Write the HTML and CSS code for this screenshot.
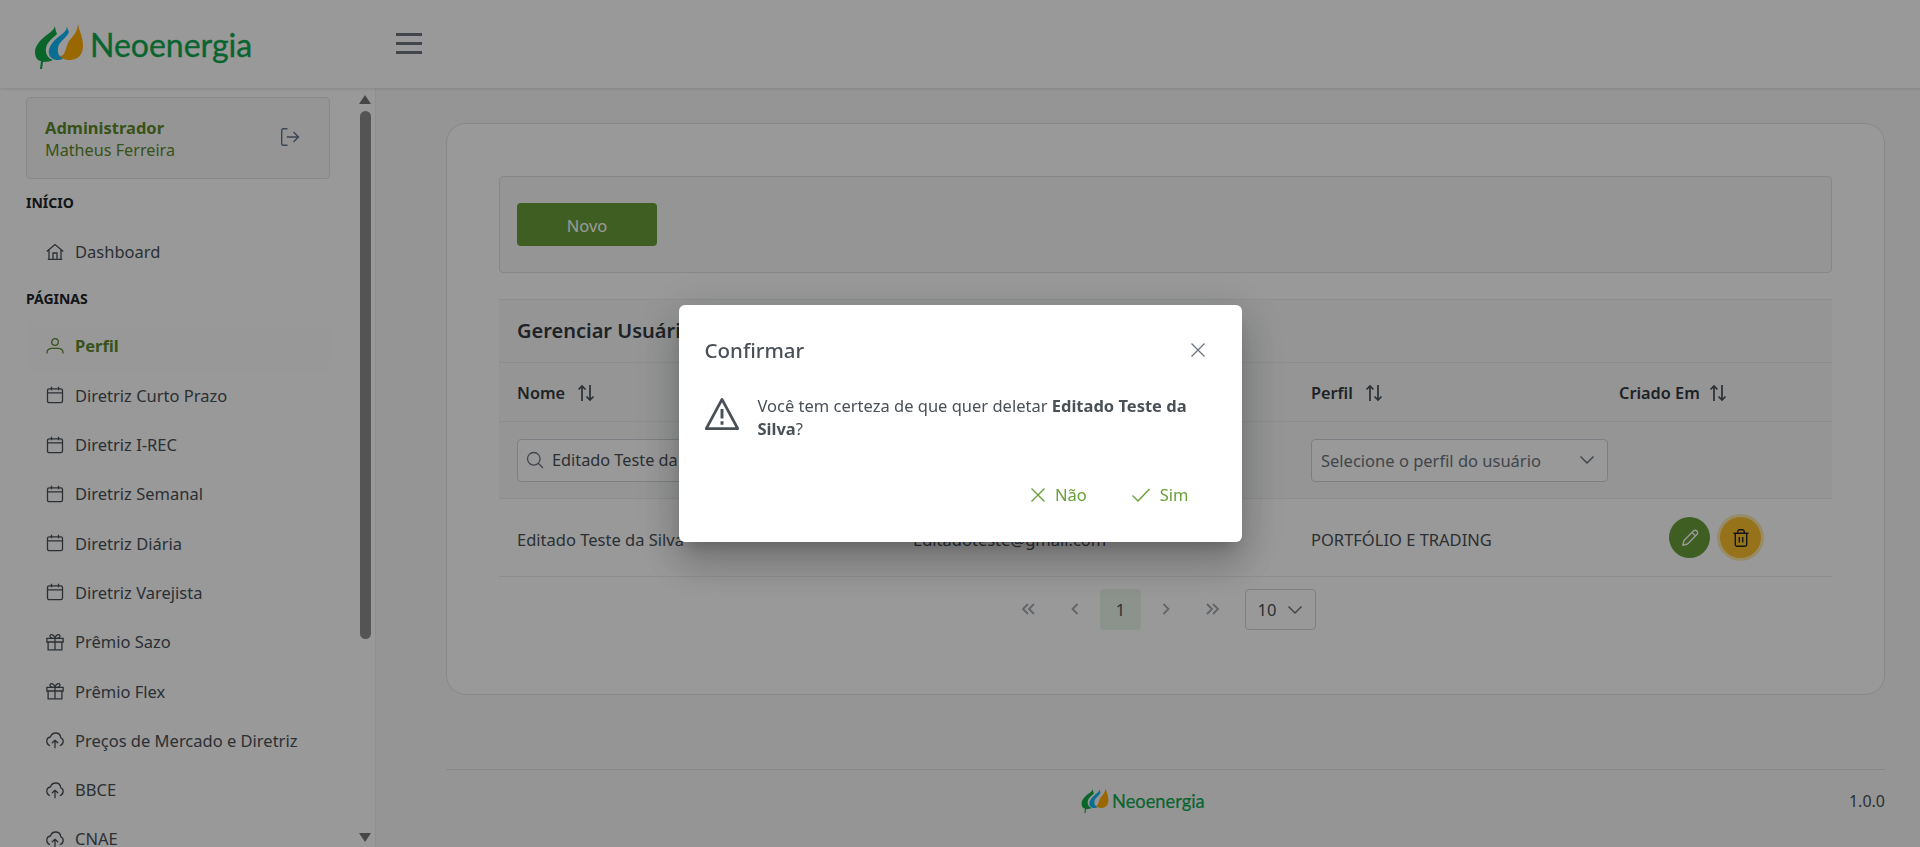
FILE: index.html
```html
<!DOCTYPE html>
<html lang="pt-BR">
<head>
<meta charset="utf-8">
<title>Neoenergia</title>
<link rel="stylesheet" href="styles.css">
</head>
<body>
<svg class="defs" width="0" height="0" aria-hidden="true">
  <symbol id="leaves" viewBox="0 0 50 47">
    <path fill="#10a845" d="M21 3C20 8 13 11 8 16C3 21 1 25 1 29C1 36 5 38 7 38L6 46L8 46L9 39C13 39 17 38 19 37C14 35 11 31 12 25C13 19 19 15 23 11C22 8 21 6 21 3Z"/>
    <path fill="#12b8f5" d="M33 3C33 8 28 11 23 15C17 20 14 26 15 31C16 35 20 37 24 37C27 37 29 36 29 35C26 34 23 31 24 25C25 18 32 16 35 9C34 7 33 5 33 3Z"/>
    <path fill="#ffae00" d="M44 1C45 8 49 13 49 23C49 32 43 37 36 37C31 37 27 35 26 33C31 33 31 27 34 20C36 15 43 12 44 1Z"/>
  </symbol>
  <symbol id="i-cal" viewBox="0 0 18 18"><path fill="none" stroke="currentColor" stroke-width="1.3" d="M3.2 2.8H14.8A1.7 1.7 0 0 1 16.5 4.5V15A1.7 1.7 0 0 1 14.8 16.700H3.200A1.700 1.700 0 0 1 1.500 15V4.500A1.700 1.700 0 0 1 3.200 2.800ZM1.500 6.800H16.500M5.500 .8V4.300M12.500 .8V4.300"/></symbol>
  <symbol id="i-gift" viewBox="0 0 18 18"><path fill="none" stroke="currentColor" stroke-width="1.3" d="M.9 5.300H17.100V9H.9ZM2.100 9V16.800H15.900V9M9 5.300V16.800M9 5.300C6 5.300 4 4.400 4 2.900C4 .8 7.800 .8 9 5.300C10.200 .8 14 .8 14 2.900C14 4.400 12 5.300 9 5.300Z"/></symbol>
  <symbol id="i-up" viewBox="0 0 18 18"><path fill="none" stroke="currentColor" stroke-width="1.3" stroke-linecap="round" stroke-linejoin="round" d="M3.500 14.500C1.800 13.700 .8 12 .8 10.200C.8 8 2.400 6.300 4.400 6C5.200 3.600 7.200 2 9.600 2C12.400 2 14.500 4.100 14.800 6.800C16.200 7.300 17.200 8.600 17.200 10.200C17.200 12.200 15.900 13.800 14.300 14.500M9 16.700V9.300M6.300 11.800L9 9.200L11.700 11.800"/></symbol>
  <symbol id="i-sort" viewBox="0 0 20 20"><path fill="none" stroke="currentColor" stroke-width="1.700" d="M6 18V3M2.500 6.500L6 3L9.500 6.500M14 2V17M10.500 13.500L14 17L17.500 13.500"/></symbol>
  <symbol id="i-chev" viewBox="0 0 16 16"><path fill="none" stroke="currentColor" stroke-width="1.500" d="M1.500 4.500L8 11L14.500 4.500"/></symbol>
</svg>

<header class="topbar">
  <div class="brand">
    <svg class="leaf-logo"><use href="#leaves"/></svg>
    <span class="brand-name">Neoenergia</span>
  </div>
  <div class="menu-btn"><span></span><span></span><span></span></div>
</header>

<div class="layout">
  <aside class="sidebar">
    <nav class="side-scroll">
      <div class="user-box">
        <div class="user-text">
          <strong>Administrador</strong>
          <span>Matheus Ferreira</span>
        </div>
        <svg class="logout" viewBox="0 0 20 20"><path fill="none" stroke="currentColor" stroke-width="1.400" d="M7.500 1.700H3.500A1.800 1.800 0 0 0 1.700 3.500V16.500A1.800 1.800 0 0 0 3.500 18.300H7.500M6.800 10H18.500M13.500 5L18.500 10L13.500 15"/></svg>
      </div>
      <div class="section first">INÍCIO</div>
      <a class="item"><svg class="ico" viewBox="0 0 18 18"><path fill="none" stroke="currentColor" stroke-width="1.300" d="M.7 8.600L9 1.500L17.300 8.600M3 6.800V16.400H15V6.800M1.800 16.400H16.200M7 16.400V10H11V16.400"/></svg>Dashboard</a>
      <div class="section">PÁGINAS</div>
      <a class="item active"><svg class="ico" viewBox="0 0 18 18"><circle cx="9" cy="5" r="3.300" fill="none" stroke="currentColor" stroke-width="1.300"/><path fill="none" stroke="currentColor" stroke-width="1.300" d="M1 16.500V15.500C1 12.800 3.500 11.300 6 11.300H12C14.500 11.300 17 12.800 17 15.500V16.500"/></svg>Perfil</a>
      <a class="item"><svg class="ico"><use href="#i-cal"/></svg>Diretriz Curto Prazo</a>
      <a class="item"><svg class="ico"><use href="#i-cal"/></svg>Diretriz I-REC</a>
      <a class="item"><svg class="ico"><use href="#i-cal"/></svg>Diretriz Semanal</a>
      <a class="item"><svg class="ico"><use href="#i-cal"/></svg>Diretriz Diária</a>
      <a class="item"><svg class="ico"><use href="#i-cal"/></svg>Diretriz Varejista</a>
      <a class="item"><svg class="ico"><use href="#i-gift"/></svg>Prêmio Sazo</a>
      <a class="item"><svg class="ico"><use href="#i-gift"/></svg>Prêmio Flex</a>
      <a class="item"><svg class="ico"><use href="#i-up"/></svg>Preços de Mercado e Diretriz</a>
      <a class="item"><svg class="ico"><use href="#i-up"/></svg>BBCE</a>
      <a class="item"><svg class="ico"><use href="#i-up"/></svg>CNAE</a>
    </nav>
    <div class="scrollbar">
      <span class="arrow-up"></span>
      <span class="thumb"></span>
      <span class="arrow-down"></span>
    </div>
  </aside>

  <main class="main">
    <section class="card">
      <div class="toolbar"><button class="btn-new">Novo</button></div>
      <div class="table-title">Gerenciar Usuários</div>
      <div class="row head">
        <div class="cell">Nome<svg class="sort"><use href="#i-sort"/></svg></div>
        <div class="cell">Email<svg class="sort"><use href="#i-sort"/></svg></div>
        <div class="cell">Perfil<svg class="sort"><use href="#i-sort"/></svg></div>
        <div class="cell">Criado Em<svg class="sort tight"><use href="#i-sort"/></svg></div>
      </div>
      <div class="row filters">
        <div class="cell">
          <div class="field search">
            <svg class="search-ico" viewBox="0 0 18 18"><circle cx="7.800" cy="7.800" r="6.300" fill="none" stroke="currentColor" stroke-width="1.300"/><path stroke="currentColor" stroke-width="1.300" d="M12.300 12.300L17 17"/></svg>
            Editado Teste da Silva
          </div>
        </div>
        <div class="cell"><div class="field email">Email</div></div>
        <div class="cell"><div class="field select">Selecione o perfil do usuário<svg class="chev"><use href="#i-chev"/></svg></div></div>
        <div class="cell"></div>
      </div>
      <div class="row data">
        <div class="cell txt">Editado Teste da Silva</div>
        <div class="cell txt">Editadoteste@gmail.com</div>
        <div class="cell txt">PORTFÓLIO E TRADING</div>
        <div class="cell actions">
          <span class="round edit"><svg viewBox="0 0 18 18"><path fill="none" stroke="currentColor" stroke-width="1.400" stroke-linejoin="round" d="M1.800 16.200L3 11.500L12.400 2.100A2 2 0 0 1 15.900 5.600L6.500 15ZM11 3.500L14.500 7"/></svg></span>
          <span class="round del"><svg viewBox="0 0 18 18"><path fill="none" stroke="currentColor" stroke-width="1.400" d="M1.500 4.300H16.500M3.300 4.300V15.500A1.700 1.700 0 0 0 5 17.200H13A1.700 1.700 0 0 0 14.700 15.500V4.300M5.800 4.300V2.500A1.700 1.700 0 0 1 7.500 .8H10.500A1.700 1.700 0 0 1 12.200 2.500V4.300M7.300 8V13.500M10.700 8V13.500"/></svg></span>
        </div>
      </div>
      <div class="pager">
        <svg class="pg" viewBox="0 0 16 16"><path d="M8 3L3 8L8 13M14 3L9 8L14 13"/></svg>
        <svg class="pg" viewBox="0 0 16 16"><path d="M10.500 3L5.500 8L10.500 13"/></svg>
        <span class="pg-current">1</span>
        <svg class="pg" viewBox="0 0 16 16"><path d="M5.500 3L10.500 8L5.500 13"/></svg>
        <svg class="pg" viewBox="0 0 16 16"><path d="M2 3L7 8L2 13M8 3L13 8L8 13"/></svg>
        <div class="field page-size">10<svg class="chev"><use href="#i-chev"/></svg></div>
      </div>
    </section>
    <footer class="footer">
      <div class="foot-brand">
        <svg class="leaf-small"><use href="#leaves"/></svg>
        <span>Neoenergia</span>
      </div>
      <span class="version">1.0.0</span>
    </footer>
  </main>
</div>

<div class="overlay">
  <div class="dialog" role="dialog">
    <div class="dlg-head">
      <span class="dlg-title">Confirmar</span>
      <svg class="dlg-close" viewBox="0 0 16 16"><path fill="none" stroke="currentColor" stroke-width="1.300" d="M1.500 1.500L14.500 14.500M14.500 1.500L1.500 14.500"/></svg>
    </div>
    <div class="dlg-body">
      <svg class="warn" viewBox="0 0 32 30"><path fill="none" stroke="currentColor" stroke-width="2.500" stroke-linejoin="round" d="M16 2L30 28H2Z"/><path stroke="currentColor" stroke-width="2.600" d="M16 10.500V19M16 21.500V24.500"/></svg>
      <p>Você tem certeza de que quer deletar <b>Editado Teste da Silva</b>?</p>
    </div>
    <div class="dlg-foot">
      <span class="dlg-btn"><svg viewBox="0 0 16 16"><path fill="none" stroke="currentColor" stroke-width="1.400" d="M1.500 1.500L14.500 14.500M14.500 1.500L1.500 14.500"/></svg>Não</span>
      <span class="dlg-btn"><svg viewBox="0 0 20 16"><path fill="none" stroke="currentColor" stroke-width="1.400" d="M1.500 8.500L7 14L18.500 2"/></svg>Sim</span>
    </div>
  </div>
</div>
</body>
</html>
```

FILE: styles.css
```css
* { box-sizing: border-box; }
html, body { margin: 0; height: 100%; }
body {
  height: 847px;
  overflow: hidden;
  background: #f8f9fa;
  color: #495057;
  font-family: "Noto Sans", "Open Sans", sans-serif;
  font-size: 16.500px;
}
.defs { position: absolute; }

/* Top bar */
.topbar {
  height: 88px;
  display: flex;
  align-items: center;
  background: #fff;
  box-shadow: 0 1px 3px rgba(0, 0, 0, .12);
  position: relative;
  z-index: 2;
}
.brand { width: 396px; padding: 4px 0 0 34px; display: flex; align-items: center; gap: 6px; }
.leaf-logo { width: 50px; height: 47px; }
.brand-name {
  font-family: Lato, sans-serif;
  font-size: 32px;
  line-height: 47px;
  color: #10a84f;
  -webkit-text-stroke: .35px #10a84f;
  margin-top: -4px;
}
.menu-btn { width: 26px; display: flex; flex-direction: column; gap: 6px; margin-top: -2px; }
.menu-btn span { height: 3px; background: #6c757d; }

.layout { display: flex; height: 759px; }

/* Sidebar */
.sidebar {
  width: 376px;
  flex: none;
  display: flex;
  background: #fff;
  border-right: 1px solid #edeff0;
}
.side-scroll { flex: 1; padding: 9px 26px 0; overflow: hidden; }
.user-box {
  width: 304px;
  height: 82px;
  padding: 2px 29px 0 18px;
  display: flex;
  align-items: center;
  justify-content: space-between;
  border: 1px solid #dee2e6;
  border-radius: 4px;
  background: #f8f9fa;
}
.user-text { display: flex; flex-direction: column; color: #5d8a2a; line-height: 23px; }
.user-text span { font-size: 16.200px; }
.logout { width: 20px; height: 20px; margin-top: -4px; color: #64748b; }
.section {
  display: flex;
  align-items: center;
  height: 45px;
  font-size: 14px;
  font-weight: 700;
  color: #212529;
}
.section.first { height: 48px; padding-bottom: 1px; }
.item {
  display: flex;
  align-items: center;
  gap: 11px;
  height: 49.300px;
  width: 304px;
  padding-left: 20px;
  border-radius: 8px;
}
.item .ico { width: 18px; height: 18px; flex: none; }
.item.active { color: #5d8a2a; font-weight: 700; background: #fefefe; }
.scrollbar {
  width: 15px;
  flex: none;
  display: flex;
  flex-direction: column;
  align-items: flex-start;
}
.arrow-up, .arrow-down { width: 0; height: 0; border-left: 6px solid transparent; border-right: 6px solid transparent; margin-left: -1px; }
.arrow-up { border-bottom: 9px solid #777; margin-top: 7px; }
.thumb { width: 11px; height: 528px; margin-top: 7px; border-radius: 6px; background: #8c8c8c; }
.arrow-down { border-top: 9px solid #777; margin-top: auto; margin-bottom: 5px; }

/* Main */
.main { flex: 1; padding: 35px 35px 0 70px; min-width: 0; }
.card {
  height: 572px;
  padding: 52px 52px 0;
  background: #fff;
  border: 1px solid #dee2e6;
  border-radius: 20px;
}
.toolbar {
  height: 97px;
  padding: 0 17px;
  display: flex;
  align-items: center;
  background: #f8f9fa;
  border: 1px solid #dee2e6;
  border-radius: 4px;
}
.btn-new {
  width: 140px;
  height: 43px;
  padding-top: 2px;
  border: 0;
  border-radius: 4px;
  background: #689f38;
  color: #fff;
  font: inherit;
}
.table-title {
  height: 64px;
  margin-top: 26px;
  padding: 0 0 1px 18px;
  display: flex;
  align-items: center;
  background: #f8f9fa;
  border-top: 1px solid #e9ecef;
  border-bottom: 1px solid #e9ecef;
  font-size: 20px;
  font-weight: 600;
  color: #343a40;
}
.row {
  display: grid;
  grid-template-columns: 396px 398px 308px 1fr;
  align-items: center;
  border-bottom: 1px solid #e9ecef;
}
.cell { padding: 0 18px; min-width: 0; }
.head { height: 59px; padding-top: 2px; background: #f8f9fa; font-size: 16.300px; font-weight: 600; color: #343a40; }
.head .cell { display: flex; align-items: center; }
.sort { width: 20px; height: 20px; margin-left: 11px; color: #495057; }
.sort.tight { margin-left: 8px; }
.filters { height: 77px; background: #f8f9fa; }
.field {
  height: 43px;
  padding: 0 9px;
  display: flex;
  align-items: center;
  background: #fff;
  border: 1px solid #ced4da;
  border-radius: 4px;
  color: #6c757d;
  white-space: nowrap;
}
.search { padding-left: 8px; gap: 8px; color: #495057; width: 330px; font-size: 16.300px; }
.search-ico { width: 18px; height: 18px; color: #6c757d; flex: none; }
.email { width: 300px; }
.select { width: 297px; justify-content: space-between; padding-right: 12px; }
.chev { width: 16px; height: 16px; color: #6c757d; flex: none; }
.data { height: 78px; }
.txt { padding-top: 3px; }
.actions { display: flex; gap: 10px; padding-left: 68px; }
.round {
  width: 41px;
  height: 41px;
  border-radius: 50%;
  display: flex;
  align-items: center;
  justify-content: center;
}
.round svg { width: 18px; height: 18px; }
.edit { background: #689f38; color: #fff; }
.del { background: #fbc02d; color: #212529; box-shadow: 0 0 0 3px #fde9ab; }

.pager { height: 78px; padding: 12px 11px 0 0; display: flex; align-items: flex-start; justify-content: center; }
.pg {
  width: 16px;
  height: 16px;
  margin: 12px 15.500px 0;
  fill: none;
  stroke: #a0a8af;
  stroke-width: 1.800;
}
.pg-current {
  width: 41px;
  height: 41px;
  margin: 0 1.500px;
  display: flex;
  align-items: center;
  justify-content: center;
  border-radius: 4px;
  background: #e9f5e9;
  color: #495057;
}
.page-size { width: 71px; height: 41px; margin-left: 8px; justify-content: space-between; color: #495057; padding: 0 12px; }

/* Footer */
.footer {
  height: 62px;
  margin-top: 74px;
  padding: 0 0 0 635px;
  display: flex;
  align-items: center;
  justify-content: space-between;
  border-top: 1px solid #dee2e6;
}
.foot-brand { display: flex; align-items: center; gap: 3px; color: #10a84f; font-family: Lato, sans-serif; font-size: 18.300px; -webkit-text-stroke: .2px #10a84f; }
.leaf-small { width: 28px; height: 27px; }
.version { font-size: 16px; }

/* Dialog */
.overlay {
  position: fixed;
  inset: 0;
  z-index: 10;
  display: flex;
  align-items: center;
  justify-content: center;
  background: rgba(0, 0, 0, .4);
}
.dialog {
  width: 563px;
  height: 237px;
  padding: 0 26px;
  background: #fff;
  border-radius: 6px;
  box-shadow: 0 11px 15px -7px rgba(0, 0, 0, .2), 0 24px 38px 3px rgba(0, 0, 0, .14), 0 9px 46px 8px rgba(0, 0, 0, .12);
}
.dlg-head { height: 74px; padding: 15px 0 0; display: flex; align-items: center; justify-content: space-between; }
.dlg-title { font-size: 20.500px; font-weight: 500; }
.dlg-close { width: 16px; height: 16px; color: #6c757d; margin-right: 10px; }
.dlg-body { display: flex; align-items: center; gap: 21px; height: 66px; padding-top: 4px; }
.warn { width: 36px; height: 34px; flex: none; margin-left: -1px; margin-right: -3px; }
.dlg-body p { margin: 0; padding-top: 5px; line-height: 23px; }
.dlg-foot { display: flex; justify-content: flex-end; gap: 44px; padding: 38px 27px 0 0; }
.dlg-btn { display: flex; align-items: center; gap: 9px; color: #689f38; }
.dlg-btn svg { width: 16px; height: 16px; }
.dlg-btn:last-child svg { width: 20px; }
```
